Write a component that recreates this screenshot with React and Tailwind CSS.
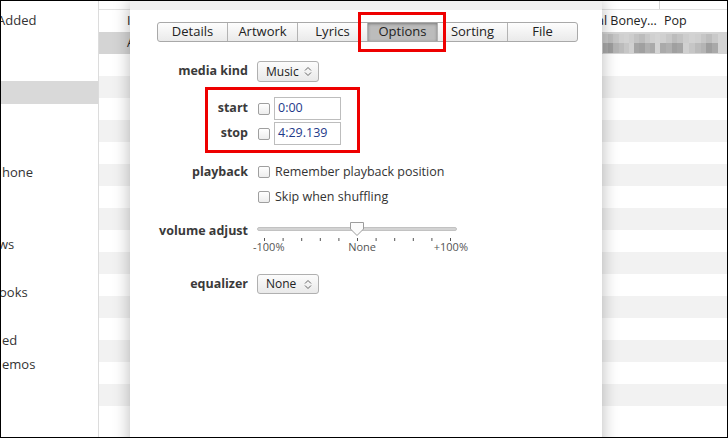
import React from 'react';

const sidebarItems = [
  { text: 'Added', mt: 'mt-[8px]', shift: '-ml-[4px]' },
  { text: '', mt: 'mt-[48px]', selected: true },
  { text: 'hone', mt: 'mt-[57px]', shift: 'ml-[1px]' },
  { text: 'ws', mt: 'mt-[48px]', shift: '-ml-[3px]' },
  { text: 'ooks', mt: 'mt-[24px]', shift: '-ml-[2px]' },
  { text: 'ed', mt: 'mt-[24px]', shift: 'ml-[1px]' },
  { text: 'emos', mt: 'mt-0', shift: 'ml-[1px]' },
];

const tabs = ['Details', 'Artwork', 'Lyrics', 'Options', 'Sorting', 'File'];

// pixelated blur blocks on the selected row (right side)
const blurTop = ['bg-[#c9c9c9]', 'bg-[#bdbdbd]', 'bg-[#c6c6c6]', 'bg-[#cfcfcf]', 'bg-[#d2d2d2]', 'bg-[#cdcdcd]', 'bg-[#c3c3c3]', 'bg-[#bcbcbc]', 'bg-[#c8c8c8]', 'bg-[#d0d0d0]'];
const blurBot = ['bg-[#a9a9a9]', 'bg-[#9e9e9e]', 'bg-[#b4b4b4]', 'bg-[#bbbbbb]', 'bg-[#c6c6c6]', 'bg-[#d0d0d0]', 'bg-[#a5a5a5]', 'bg-[#a0a0a0]', 'bg-[#b0b0b0]', 'bg-[#aaaaaa]'];

function Chevrons() {
  return (
    <svg width="8" height="11" viewBox="0 0 8 11" className="ml-auto shrink-0">
      <path d="M1 4.5 L4 1.5 L7 4.5" fill="none" stroke="#666" strokeWidth="1" />
      <path d="M1 6.5 L4 9.5 L7 6.5" fill="none" stroke="#666" strokeWidth="1" />
    </svg>
  );
}

function Select({ value }) {
  return (
    <div className="flex items-center w-[62px] h-full pl-[8px] pr-[6px] rounded-[3px] border border-[#b0b0b0] bg-gradient-to-b from-[#fcfcfc] to-[#e9e9e9] text-[#222] text-[12px]">
      <span>{value}</span>
      <Chevrons />
    </div>
  );
}

function Checkbox() {
  return <div className="w-[12px] h-[12px] shrink-0 rounded-[2px] border border-[#9f9f9f] bg-gradient-to-b from-white to-[#ededed]" />;
}

function Label({ children }) {
  return <div className="w-[118px] shrink-0 text-right font-bold text-[#3a3a3a]">{children}</div>;
}

export default function App() {
  const ticks = Array.from({ length: 11 }, (_, i) => 7 + i * 18.6);

  return (
    <div className="w-[728px] h-[438px] border border-black bg-white relative overflow-hidden flex font-['Open_Sans','Noto_Sans',sans-serif] text-[12.5px] text-[#333]">
      {/* SIDEBAR */}
      <div className="w-[98px] shrink-0 border-r border-[#dcdcdc] flex flex-col overflow-hidden">
        {sidebarItems.map((item, i) => (
          <div
            key={i}
            className={`${item.mt} ${item.selected ? 'h-[23px] bg-[#d9d9d9]' : 'h-[24px]'} flex items-center whitespace-nowrap text-[13px]`}
          >
            <span className={item.shift}>{item.text}</span>
          </div>
        ))}
      </div>

      {/* TRACK LIST */}
      <div className="flex-1 flex flex-col overflow-hidden">
        <div className="h-[9px] shrink-0 border-b border-[#e2e2e2] flex overflow-hidden">
          <div className="w-[560px] shrink-0" />
          <div className="w-[1px] h-full bg-[#d6d6d6]" />
          <span className="ml-[6px] -mt-[13px] text-[#666] leading-[16px]">Genre</span>
        </div>
        {Array.from({ length: 19 }).map((_, i) => (
          <div
            key={i}
            className={`h-[22px] shrink-0 flex items-center whitespace-nowrap ${
              i === 1 ? 'bg-[#d4d4d4]' : i % 2 === 1 ? 'bg-[#f2f2f2]' : 'bg-white'
            }`}
          >
            {i === 0 && (
              <>
                <span className="ml-[28px] w-[470px] shrink-0 text-[#222]">Ike Love</span>
                <span className="w-[67px] shrink-0 text-[#222]">al Boney...</span>
                <span className="text-[#222]">Pop</span>
              </>
            )}
            {i === 1 && (
              <>
                <span className="ml-[28px] w-[476px] shrink-0 text-[#222]">A</span>
                <div className="flex flex-col w-[52px] h-[19px] shrink-0">
                  <div className="flex h-[9px]">
                    {blurTop.map((c, k) => <div key={k} className={`flex-1 ${c}`} />)}
                  </div>
                  <div className="flex h-[10px]">
                    {blurBot.map((c, k) => <div key={k} className={`flex-1 ${c}`} />)}
                  </div>
                </div>
                <div className="flex flex-col w-[58px] h-[19px] ml-[5px] shrink-0">
                  <div className="flex h-[9px]">
                    {blurTop.slice().reverse().map((c, k) => <div key={k} className={`flex-1 ${c}`} />)}
                  </div>
                  <div className="flex h-[10px]">
                    {blurBot.slice().reverse().map((c, k) => <div key={k} className={`flex-1 ${c}`} />)}
                  </div>
                </div>
              </>
            )}
          </div>
        ))}
      </div>

      {/* DIALOG */}
      <div className="absolute left-[129px] top-0 w-[472px] h-[460px] bg-white shadow-[0_0_16px_rgba(0,0,0,0.28)] flex flex-col">
        <div className="h-[9px] bg-[#f0f0f0]" />

        {/* TABS */}
        <div className="mt-[12px] ml-[27px] w-[421px] h-[20px] flex rounded-[3px] border border-[#a9a9a9] bg-gradient-to-b from-[#fdfdfd] to-[#eaeaea] overflow-hidden text-[13px]">
          {tabs.map((t, i) => (
            <div
              key={t}
              className={`flex-1 flex items-center justify-center text-[#222] ${i > 0 ? 'border-l border-[#b3b3b3]' : ''} ${
                t === 'Options' ? 'bg-[#bcbcbc] shadow-[inset_0_1px_3px_rgba(0,0,0,0.35)]' : ''
              }`}
            >
              {t}
            </div>
          ))}
        </div>

        {/* media kind */}
        <div className="mt-[19px] h-[21px] flex items-center">
          <Label>media kind</Label>
          <div className="ml-[9px] h-full">
            <Select value="Music" />
          </div>
        </div>

        {/* start / stop */}
        <div className="mt-[15px] h-[23px] flex items-center">
          <Label>start</Label>
          <div className="ml-[10px]"><Checkbox /></div>
          <div className="ml-[4px] w-[67px] h-full border border-[#bdbdbd] pl-[3px] flex items-center text-[#1e3a8a]">0:00</div>
        </div>
        <div className="mt-[2px] h-[23px] flex items-center">
          <Label>stop</Label>
          <div className="ml-[10px]"><Checkbox /></div>
          <div className="ml-[4px] w-[67px] h-full border border-[#bdbdbd] pl-[3px] flex items-center text-[#1e3a8a]">4:29.139</div>
        </div>

        {/* playback */}
        <div className="mt-[15px] h-[24px] flex items-center">
          <Label>playback</Label>
          <div className="ml-[10px]"><Checkbox /></div>
          <span className="ml-[5px] text-[#333]">Remember playback position</span>
        </div>
        <div className="mt-[1px] h-[24px] flex items-center">
          <div className="w-[118px] shrink-0" />
          <div className="ml-[10px]"><Checkbox /></div>
          <span className="ml-[5px] text-[#333]">Skip when shuffling</span>
        </div>

        {/* volume adjust */}
        <div className="mt-[12px] flex items-start">
          <div className="h-[20px] flex items-center">
            <Label>volume adjust</Label>
          </div>
          <div className="ml-[9px] flex flex-col">
            <svg width="200" height="20" viewBox="0 0 200 20">
              <rect x="0.5" y="6.5" width="199" height="3" rx="1.5" fill="#d3d3d3" stroke="#c2c2c2" />
              <path d="M93.5 1.5 H106.5 V8 L100 14.5 L93.5 8 Z" fill="#fbfbfb" stroke="#9c9c9c" />
              {ticks.map((x, i) => (
                <rect key={i} x={x} y="17" width="1" height="3" fill="#555" />
              ))}
            </svg>
            <div className="-ml-[4px] w-[215px] h-[12px] flex justify-between text-[11px] leading-[12px] text-[#555]">
              <span>-100%</span>
              <span className="ml-[6px]">None</span>
              <span>+100%</span>
            </div>
          </div>
        </div>

        {/* equalizer */}
        <div className="mt-[21px] h-[20px] flex items-center">
          <Label>equalizer</Label>
          <div className="ml-[9px] h-full">
            <Select value="None" />
          </div>
        </div>
      </div>

      {/* RED HIGHLIGHT BOXES */}
      <div className="absolute left-[357px] top-[11px] w-[88px] h-[40px] border-[3px] border-[#ee0000]" />
      <div className="absolute left-[204px] top-[86px] w-[155px] h-[66px] border-[3px] border-[#ee0000]" />
    </div>
  );
}
